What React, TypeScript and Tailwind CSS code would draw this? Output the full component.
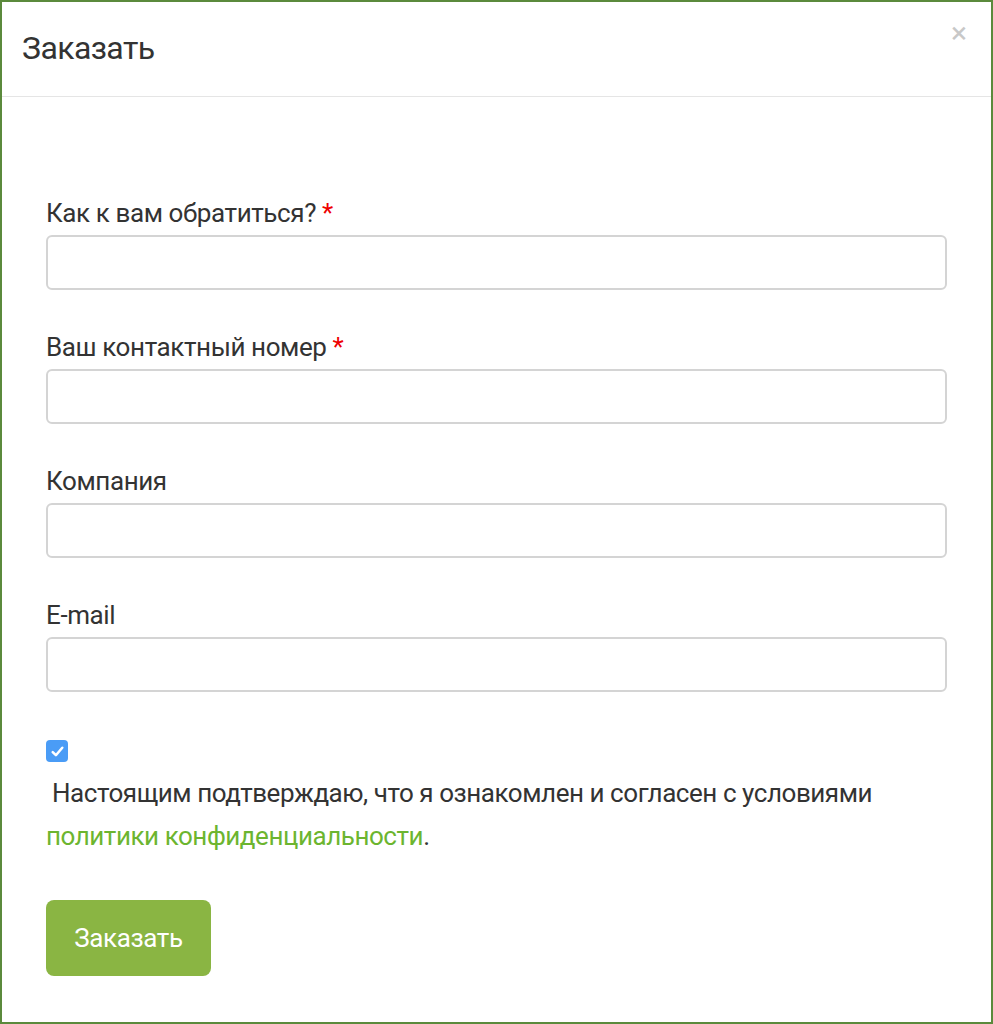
import { useState } from 'react';

const fields = [
  { label: 'Как к вам обратиться?', required: true, type: 'text' },
  { label: 'Ваш контактный номер', required: true, type: 'tel' },
  { label: 'Компания', required: false, type: 'text' },
  { label: 'E-mail', required: false, type: 'email' },
];

const App = () => {
  const [agreed, setAgreed] = useState(true);

  return (
    <div
      className="h-[1024px] w-[993px] border-2 border-[#5b8a3c] bg-white text-[#333]"
      style={{ fontFamily: 'Roboto, "Noto Sans", sans-serif' }}
    >
      {/* header */}
      <div className="flex h-[95px] items-start justify-between border-b border-[#e5e5e5] pl-5 pr-6">
        <h4 className="mt-[24px] text-[32px] leading-[44px] font-normal tracking-[-0.6px]">Заказать</h4>
        <button className="mt-[16px] text-[30px] leading-[30px] text-[#c8c8c8]" aria-label="Закрыть">
          ×
        </button>
      </div>

      {/* body */}
      <form className="px-[44px] pt-[98px]">
        {fields.map((f) => (
          <div key={f.label} className="mb-[39px]">
            <label className="block text-[26px] leading-[36px] tracking-[-0.4px]">
              {f.label}
              {f.required && <span className="ml-[6px] text-[#e00]">*</span>}
            </label>
            <input
              type={f.type}
              className="mt-[4px] block h-[55px] w-full rounded-[6px] border-2 border-[#d4d4d4] bg-white px-3 text-[24px] outline-none"
            />
          </div>
        ))}

        <div className="pt-[9px]">
          <button
            type="button"
            onClick={() => setAgreed(!agreed)}
            className={`flex h-[22px] w-[22px] items-center justify-center rounded-[4px] ${
              agreed ? 'bg-[#4a9cf6]' : 'border border-[#aaa] bg-white'
            }`}
          >
            {agreed && (
              <svg viewBox="0 0 16 16" className="h-[17px] w-[17px]" fill="none" stroke="white" strokeWidth="2.4" strokeLinecap="round" strokeLinejoin="round">
                <path d="M3.5 8.5l3 3 6-7" />
              </svg>
            )}
          </button>
          <p className="mt-[10px] text-[26px] leading-[43px] tracking-[-0.45px]">
            {'\u00a0'}Настоящим подтверждаю, что я ознакомлен и согласен с условиями{' '}
            <a className="text-[#6cb52f]">политики конфиденциальности</a>.
          </p>
        </div>

        <button
          type="button"
          className="mt-[42px] h-[76px] w-[165px] rounded-[8px] bg-[#8ab543] text-[26px] tracking-[-0.4px] text-white"
        >
          Заказать
        </button>
      </form>
    </div>
  );
};

export default App;
